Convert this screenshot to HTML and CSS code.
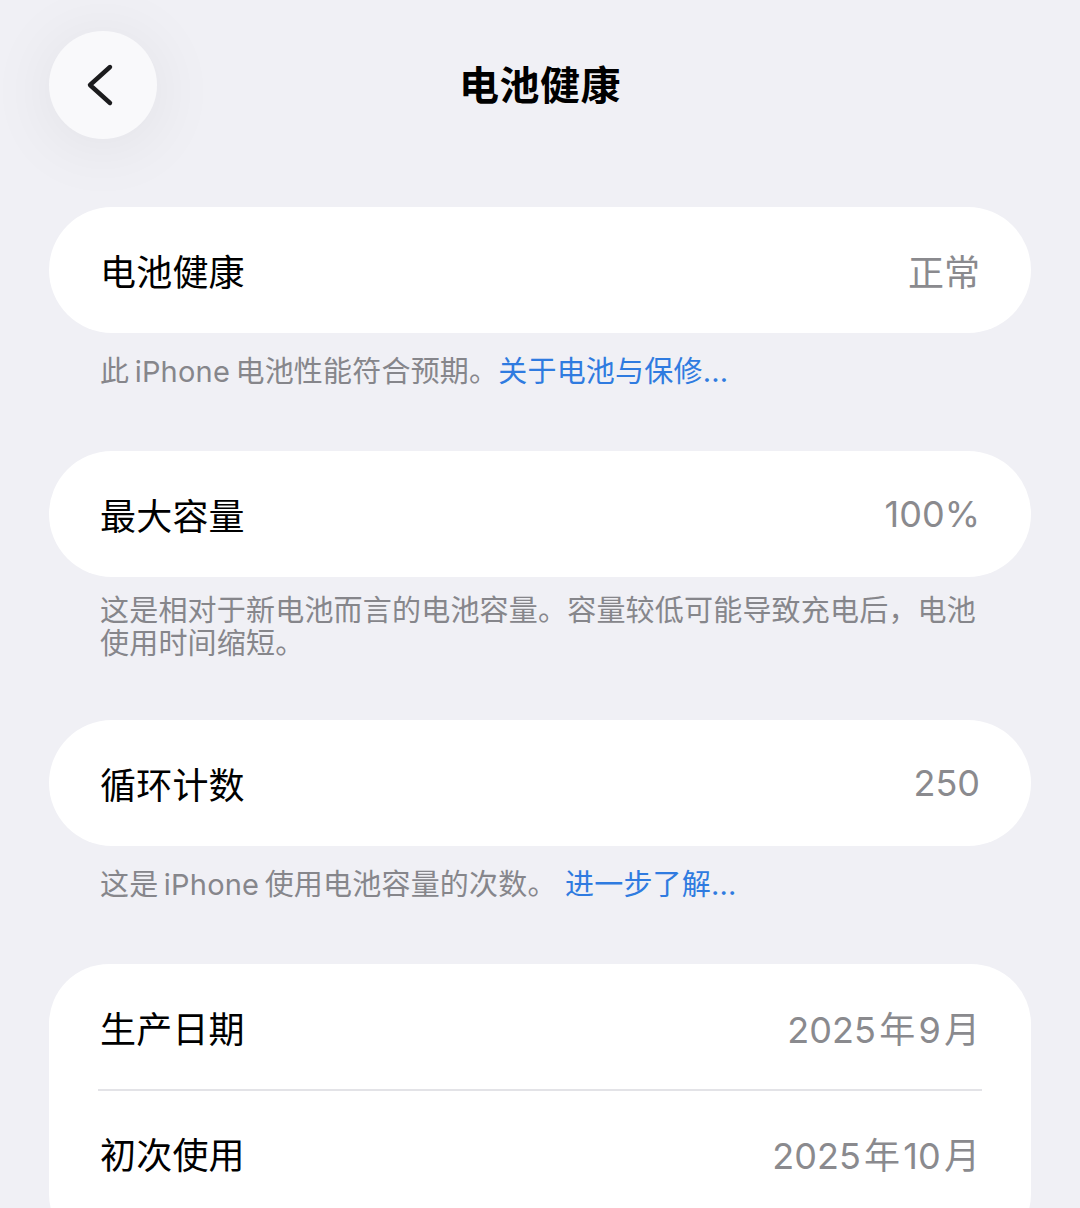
FILE: index.html
```html
<!DOCTYPE html>
<html lang="zh-CN">
<head>
<meta charset="utf-8">
<title>电池健康</title>
<link rel="stylesheet" href="styles.css">
</head>
<body>
<div class="page">
  <header class="header">
    <button class="back" aria-label="返回">
      <svg width="40" height="52" viewBox="0 0 40 52"><path d="M29 8 L9 26 L29 44" fill="none" stroke="#1c1c1e" stroke-width="4.4" stroke-linecap="round" stroke-linejoin="round"/></svg>
    </button>
    <h1 class="title">电池健康</h1>
    <div></div>
  </header>

  <section class="card pill">
    <div class="row"><span class="label">电池健康</span><span class="value">正常</span></div>
  </section>
  <p class="note">此&#8201;iPhone&#8201;电池性能符合预期。<a class="link">关于电池与保修...</a></p>

  <section class="card pill">
    <div class="row"><span class="label">最大容量</span><span class="value">100%</span></div>
  </section>
  <p class="note multi">这是相对于新电池而言的电池容量。容量较低可能导致充电后，电池使用时间缩短。</p>

  <section class="card pill">
    <div class="row"><span class="label">循环计数</span><span class="value">250</span></div>
  </section>
  <p class="note">这是&#8201;iPhone&#8201;使用电池容量的次数。 <a class="link">进一步了解...</a></p>

  <section class="card group">
    <div class="row"><span class="label">生产日期</span><span class="value">2025&#8202;年&#8202;9&#8202;月</span></div>
    <div class="divider"></div>
    <div class="row"><span class="label">初次使用</span><span class="value">2025&#8202;年&#8202;10&#8202;月</span></div>
  </section>
</div>
</body>
</html>
```

FILE: styles.css
```css
html, body {
  margin: 0;
  padding: 0;
  background: #f0f0f5;
}
body {
  font-family: "Inter", "Noto Sans CJK SC", sans-serif;
  color: #000;
  overflow: hidden;
  height: 1208px;
}
.page {
  padding: 0 49px;
}
.header {
  display: grid;
  grid-template-columns: 108px 1fr 108px;
  align-items: center;
  padding-top: 31px;
  height: 108px;
  margin-bottom: 68px;
}
.back {
  width: 108px;
  height: 108px;
  border-radius: 50%;
  border: none;
  background: #f9f9fb;
  box-shadow: 0 6px 70px rgba(0, 0, 0, 0.07);
  display: flex;
  align-items: center;
  justify-content: center;
  padding: 0;
  padding-right: 4px;
}
.title {
  margin: 0;
  text-align: center;
  font-size: 40px;
  font-weight: 700;
  line-height: 1;
  padding-top: 2px;
  letter-spacing: 0.5px;
}
.card {
  background: #fff;
}
.pill {
  border-radius: 63px;
}
.group {
  border-radius: 60px;
  height: 290px;
}
.row {
  height: 126px;
  display: flex;
  align-items: center;
  justify-content: space-between;
  padding: 0 51px;
}
.label {
  font-size: 36px;
  font-weight: 400;
  letter-spacing: 0.2px;
}
.value {
  font-size: 36px;
  color: #8a8a8e;
  font-weight: 400;
}
.divider {
  height: 2px;
  background: #e3e3e7;
  margin: -1px 49px;
}
.note {
  margin: 22px 0 62px;
  padding: 0 51px;
  font-size: 29px;
  line-height: 34px;
  height: 34px;
  color: #86868b;
  letter-spacing: 0.2px;
}
.note.multi {
  height: 67px;
  line-height: 33px;
  margin: 17px 0 59px;
}
.link {
  color: #2f7be0;
}
```
